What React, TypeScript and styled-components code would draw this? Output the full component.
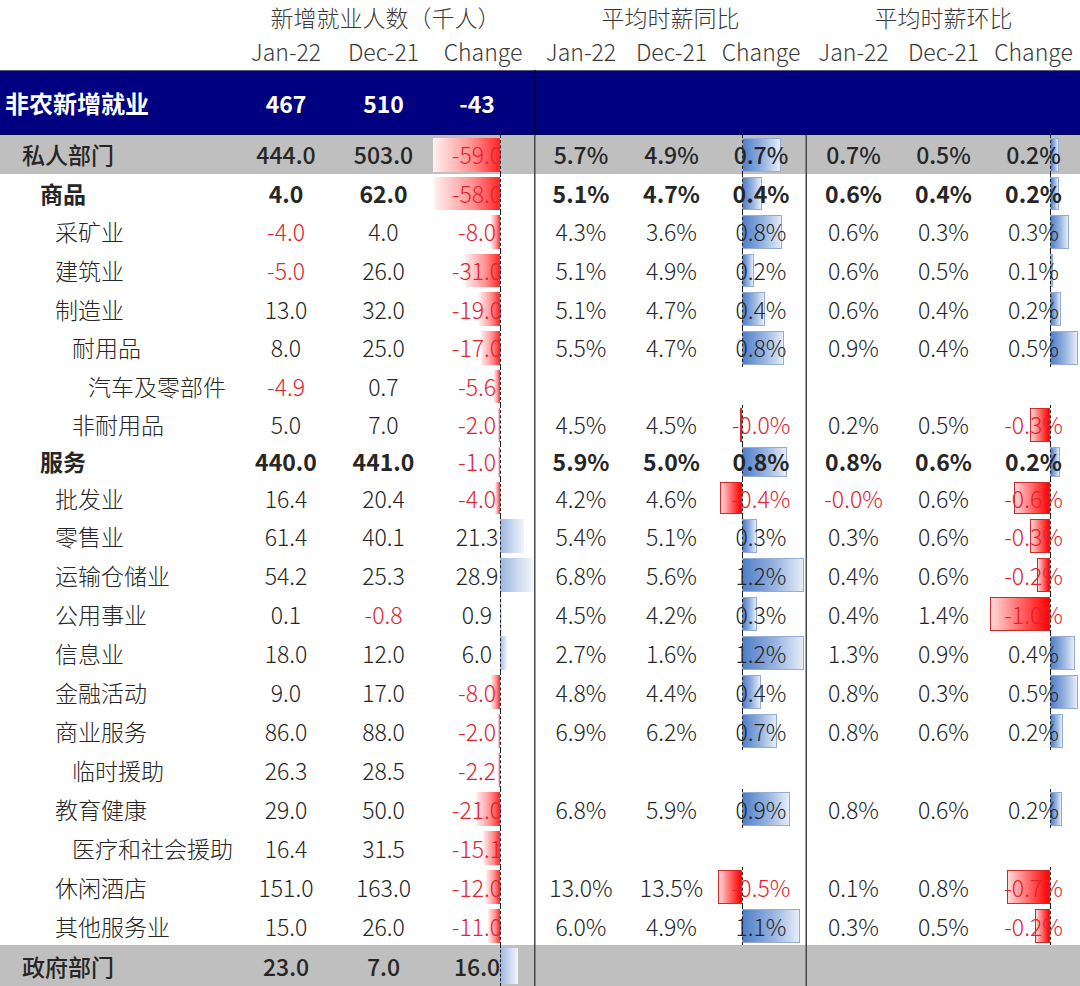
import React from "react";
import styled, { createGlobalStyle, css } from "styled-components";

const GlobalStyle = createGlobalStyle`
  html, body { margin: 0; padding: 0; background: #ffffff; }
  body {
    font-family: "Noto Sans CJK SC", "Noto Sans", sans-serif;
    color: #262626;
  }
`;

const COLS = "237px 98px 97px 102px 94px 87px 92px 93px 87px 93px";
const DIVIDER = "#474747";

type Kind = "normal" | "bold" | "gray";
type Variant = "soft" | "framed";

interface Pct {
  jan: string;
  dec: string;
  chg: string;
  v: number;
}

interface RowData {
  label: string;
  indent: number;
  kind: Kind;
  h: number;
  a: string;
  b: string;
  c: string;
  g2?: Pct;
  g3?: Pct;
}

const p = (jan: string, dec: string, chg: string, v: number): Pct => ({ jan, dec, chg, v });

const ROWS: RowData[] = [
  { label: "私人部门", indent: 22, kind: "gray", h: 38.6, a: "444.0", b: "503.0", c: "-59.0", g2: p("5.7%", "4.9%", "0.7%", 0.75), g3: p("0.7%", "0.5%", "0.2%", 0.16) },
  { label: "商品", indent: 40, kind: "bold", h: 38.6, a: "4.0", b: "62.0", c: "-58.0", g2: p("5.1%", "4.7%", "0.4%", 0.38), g3: p("0.6%", "0.4%", "0.2%", 0.15) },
  { label: "采矿业", indent: 55, kind: "normal", h: 38.6, a: "-4.0", b: "4.0", c: "-8.0", g2: p("4.3%", "3.6%", "0.8%", 0.77), g3: p("0.6%", "0.3%", "0.3%", 0.33) },
  { label: "建筑业", indent: 55, kind: "normal", h: 38.6, a: "-5.0", b: "26.0", c: "-31.0", g2: p("5.1%", "4.9%", "0.2%", 0.23), g3: p("0.6%", "0.5%", "0.1%", 0.06) },
  { label: "制造业", indent: 55, kind: "normal", h: 38.6, a: "13.0", b: "32.0", c: "-19.0", g2: p("5.1%", "4.7%", "0.4%", 0.44), g3: p("0.6%", "0.4%", "0.2%", 0.19) },
  { label: "耐用品", indent: 72, kind: "normal", h: 38.6, a: "8.0", b: "25.0", c: "-17.0", g2: p("5.5%", "4.7%", "0.8%", 0.8), g3: p("0.9%", "0.4%", "0.5%", 0.48) },
  { label: "汽车及零部件", indent: 88, kind: "normal", h: 38.6, a: "-4.9", b: "0.7", c: "-5.6" },
  { label: "非耐用品", indent: 72, kind: "normal", h: 38.6, a: "5.0", b: "7.0", c: "-2.0", g2: p("4.5%", "4.5%", "-0.0%", -0.04), g3: p("0.2%", "0.5%", "-0.3%", -0.34) },
  { label: "服务", indent: 40, kind: "bold", h: 35, a: "440.0", b: "441.0", c: "-1.0", g2: p("5.9%", "5.0%", "0.8%", 0.86), g3: p("0.8%", "0.6%", "0.2%", 0.17) },
  { label: "批发业", indent: 55, kind: "normal", h: 37.5, a: "16.4", b: "20.4", c: "-4.0", g2: p("4.2%", "4.6%", "-0.4%", -0.42), g3: p("-0.0%", "0.6%", "-0.6%", -0.62) },
  { label: "零售业", indent: 55, kind: "normal", h: 39, a: "61.4", b: "40.1", c: "21.3", g2: p("5.4%", "5.1%", "0.3%", 0.29), g3: p("0.3%", "0.6%", "-0.3%", -0.34) },
  { label: "运输仓储业", indent: 55, kind: "normal", h: 39, a: "54.2", b: "25.3", c: "28.9", g2: p("6.8%", "5.6%", "1.2%", 1.19), g3: p("0.4%", "0.6%", "-0.2%", -0.22) },
  { label: "公用事业", indent: 55, kind: "normal", h: 39, a: "0.1", b: "-0.8", c: "0.9", g2: p("4.5%", "4.2%", "0.3%", 0.29), g3: p("0.4%", "1.4%", "-1.0%", -1.03) },
  { label: "信息业", indent: 55, kind: "normal", h: 39, a: "18.0", b: "12.0", c: "6.0", g2: p("2.7%", "1.6%", "1.2%", 1.19), g3: p("1.3%", "0.9%", "0.4%", 0.43) },
  { label: "金融活动", indent: 55, kind: "normal", h: 39, a: "9.0", b: "17.0", c: "-8.0", g2: p("4.8%", "4.4%", "0.4%", 0.37), g3: p("0.8%", "0.3%", "0.5%", 0.48) },
  { label: "商业服务", indent: 55, kind: "normal", h: 39, a: "86.0", b: "88.0", c: "-2.0", g2: p("6.9%", "6.2%", "0.7%", 0.67), g3: p("0.8%", "0.6%", "0.2%", 0.22) },
  { label: "临时援助", indent: 72, kind: "normal", h: 39, a: "26.3", b: "28.5", c: "-2.2" },
  { label: "教育健康", indent: 55, kind: "normal", h: 39, a: "29.0", b: "50.0", c: "-21.0", g2: p("6.8%", "5.9%", "0.9%", 0.92), g3: p("0.8%", "0.6%", "0.2%", 0.21) },
  { label: "医疗和社会援助", indent: 72, kind: "normal", h: 39, a: "16.4", b: "31.5", c: "-15.1" },
  { label: "休闲酒店", indent: 55, kind: "normal", h: 39, a: "151.0", b: "163.0", c: "-12.0", g2: p("13.0%", "13.5%", "-0.5%", -0.46), g3: p("0.1%", "0.8%", "-0.7%", -0.74) },
  { label: "其他服务业", indent: 55, kind: "normal", h: 39, a: "15.0", b: "26.0", c: "-11.0", g2: p("6.0%", "4.9%", "1.1%", 1.12), g3: p("0.3%", "0.5%", "-0.2%", -0.26) },
  { label: "政府部门", indent: 22, kind: "gray", h: 40.5, a: "23.0", b: "7.0", c: "16.0" },
];

/* ---------- layout ---------- */

const Table = styled.div`
  width: 1080px;
  display: flex;
  flex-direction: column;
`;

const HeaderRow = styled.div<{ $h: number }>`
  display: grid;
  grid-template-columns: ${COLS};
  height: ${(p) => p.$h}px;
  align-items: center;
  font-size: 23px;
  font-weight: 300;
  color: #3a3a3a;
  white-space: nowrap;
`;

const GroupTitle = styled.div<{ $start: number }>`
  grid-column: ${(p) => p.$start} / span 3;
  text-align: center;
`;

const ColTitle = styled.div`
  text-align: center;
`;

const TotalRow = styled.div`
  display: grid;
  grid-template-columns: ${COLS};
  height: 65px;
  background: #000080;
  color: #ffffff;
  font-weight: 700;
  font-size: 23px;
  box-shadow: inset 0 1px 0 #5a5a7a, inset 0 -1px 0 #00004a;
`;

const Row = styled.div<{ $kind: Kind; $h: number }>`
  display: grid;
  grid-template-columns: ${COLS};
  height: ${(p) => p.$h}px;
  font-size: 23px;
  color: #262626;
  background: ${(p) => (p.$kind === "gray" ? "#bfbfbf" : "transparent")};
  font-weight: ${(p) => (p.$kind === "bold" ? 700 : p.$kind === "gray" ? 500 : 300)};
`;

const Cell = styled.div<{ $divider?: "dark" | "navy"; $red?: boolean }>`
  display: flex;
  align-items: center;
  justify-content: center;
  white-space: nowrap;
  color: ${(p) => (p.$red ? "#e3232e" : "inherit")};
  ${(p) =>
    p.$divider === "dark" &&
    css`
      box-shadow: inset 1.5px 0 0 ${DIVIDER};
    `}
  ${(p) =>
    p.$divider === "navy" &&
    css`
      box-shadow: inset 1.5px 0 0 #00003c;
    `}
`;

const LabelCell = styled.div<{ $indent: number }>`
  display: flex;
  align-items: center;
  padding-left: ${(p) => p.$indent}px;
  white-space: nowrap;
`;

const ChangeCell = styled.div<{ $padRight: number; $divider?: boolean }>`
  position: relative;
  display: flex;
  align-items: center;
  justify-content: center;
  padding-right: ${(p) => p.$padRight}px;
  white-space: nowrap;
  ${(p) =>
    p.$divider &&
    css`
      box-shadow: inset -1.5px 0 0 ${DIVIDER};
    `}
`;

const Value = styled.span<{ $red?: boolean; $plain?: boolean }>`
  position: relative;
  z-index: 1;
  color: ${(p) => (p.$red ? "#e3232e" : "inherit")};
  ${(p) =>
    p.$plain &&
    css`
      font-weight: 300;
    `}
`;

const Axis = styled.div<{ $axis: number }>`
  position: absolute;
  top: 0;
  bottom: 0;
  left: ${(p) => p.$axis}px;
  border-left: 1px dashed #1e1e1e;
  z-index: 2;
`;

const Bar = styled.div<{ $neg: boolean; $axis: number; $variant: Variant }>`
  position: absolute;
  top: 3px;
  bottom: 2px;
  box-sizing: border-box;
  ${(p) =>
    p.$neg
      ? css`
          right: calc(100% - ${p.$axis}px);
        `
      : css`
          left: ${p.$axis}px;
        `}
  ${(p) => {
    if (p.$variant === "soft") {
      return p.$neg
        ? css`
            background: linear-gradient(to left, #ff2424 0%, #ff8e8e 40%, #fff0f0 100%);
          `
        : css`
            background: linear-gradient(to right, #9bb5e0 0%, #cddaf0 55%, #f1f5fb 100%);
          `;
    }
    return p.$neg
      ? css`
          background: linear-gradient(to left, #ff0000 0%, #ff6a6a 50%, #ffd9d9 100%);
          border: 1px solid #cf2a2a;
        `
      : css`
          background: linear-gradient(to right, #4f7fc9 0%, #9ab5e0 55%, #e6edf8 100%);
          border: 1px solid #93acd8;
        `;
  }}
`;

/* ---------- pieces ---------- */

const isNeg = (s: string) => s.trim().startsWith("-");

interface ChangeProps {
  text?: string;
  value?: number;
  scale: number;
  axis: number;
  padRight: number;
  variant: Variant;
  rightDivider?: boolean;
  plain?: boolean;
}

const Change: React.FC<ChangeProps> = ({ text, value, scale, axis, padRight, variant, rightDivider, plain }) => {
  const has = text !== undefined && value !== undefined;
  return (
    <ChangeCell $padRight={padRight} $divider={rightDivider}>
      {has && (
        <>
          <Bar
            $neg={(value as number) < 0}
            $axis={axis}
            $variant={variant}
            style={{ width: `${Math.max(2, Math.abs(value as number) * scale)}px` }}
          />
          <Value $red={isNeg(text as string)} $plain={plain}>
            {text}
          </Value>
          <Axis $axis={axis} />
        </>
      )}
    </ChangeCell>
  );
};

const DataRow: React.FC<{ r: RowData }> = ({ r }) => (
  <Row $kind={r.kind} $h={r.h}>
    <LabelCell $indent={r.indent}>{r.label}</LabelCell>
    <Cell $red={isNeg(r.a)}>{r.a}</Cell>
    <Cell $red={isNeg(r.b)}>{r.b}</Cell>
    <Change
      text={r.c}
      value={parseFloat(r.c)}
      scale={1.13}
      axis={68}
      padRight={12}
      variant="soft"
      plain={r.kind === "bold" || r.label === "私人部门"}
    />
    <Cell $divider="dark" $red={r.g2 ? isNeg(r.g2.jan) : false}>{r.g2?.jan}</Cell>
    <Cell $red={r.g2 ? isNeg(r.g2.dec) : false}>{r.g2?.dec}</Cell>
    <Change text={r.g2?.chg} value={r.g2?.v} scale={52} axis={27} padRight={0} variant="framed" rightDivider />
    <Cell $red={r.g3 ? isNeg(r.g3.jan) : false}>{r.g3?.jan}</Cell>
    <Cell $red={r.g3 ? isNeg(r.g3.dec) : false}>{r.g3?.dec}</Cell>
    <Change text={r.g3?.chg} value={r.g3?.v} scale={58} axis={63} padRight={0} variant="framed" />
  </Row>
);

const TotalLabel = styled.div`
  display: flex;
  align-items: center;
  padding-left: 5px;
  font-size: 24px;
  white-space: nowrap;
`;

const TotalChange = styled.div`
  display: flex;
  align-items: center;
  justify-content: center;
  padding-right: 12px;
`;

export default function App() {
  return (
    <>
      <GlobalStyle />
      <Table>
        <HeaderRow $h={32}>
          <div />
          <GroupTitle $start={2}>新增就业人数（千人）</GroupTitle>
          <GroupTitle $start={5}>平均时薪同比</GroupTitle>
          <GroupTitle $start={8}>平均时薪环比</GroupTitle>
        </HeaderRow>
        <HeaderRow $h={38}>
          <div />
          <ColTitle>Jan-22</ColTitle>
          <ColTitle>Dec-21</ColTitle>
          <ColTitle>Change</ColTitle>
          <ColTitle>Jan-22</ColTitle>
          <ColTitle>Dec-21</ColTitle>
          <ColTitle>Change</ColTitle>
          <ColTitle>Jan-22</ColTitle>
          <ColTitle>Dec-21</ColTitle>
          <ColTitle>Change</ColTitle>
        </HeaderRow>
        <TotalRow>
          <TotalLabel>非农新增就业</TotalLabel>
          <Cell>467</Cell>
          <Cell>510</Cell>
          <TotalChange>-43</TotalChange>
          <Cell $divider="navy" />
          <Cell />
          <Cell />
          <Cell />
          <Cell />
          <Cell />
        </TotalRow>
        {ROWS.map((r) => (
          <DataRow key={r.label} r={r} />
        ))}
      </Table>
    </>
  );
}
